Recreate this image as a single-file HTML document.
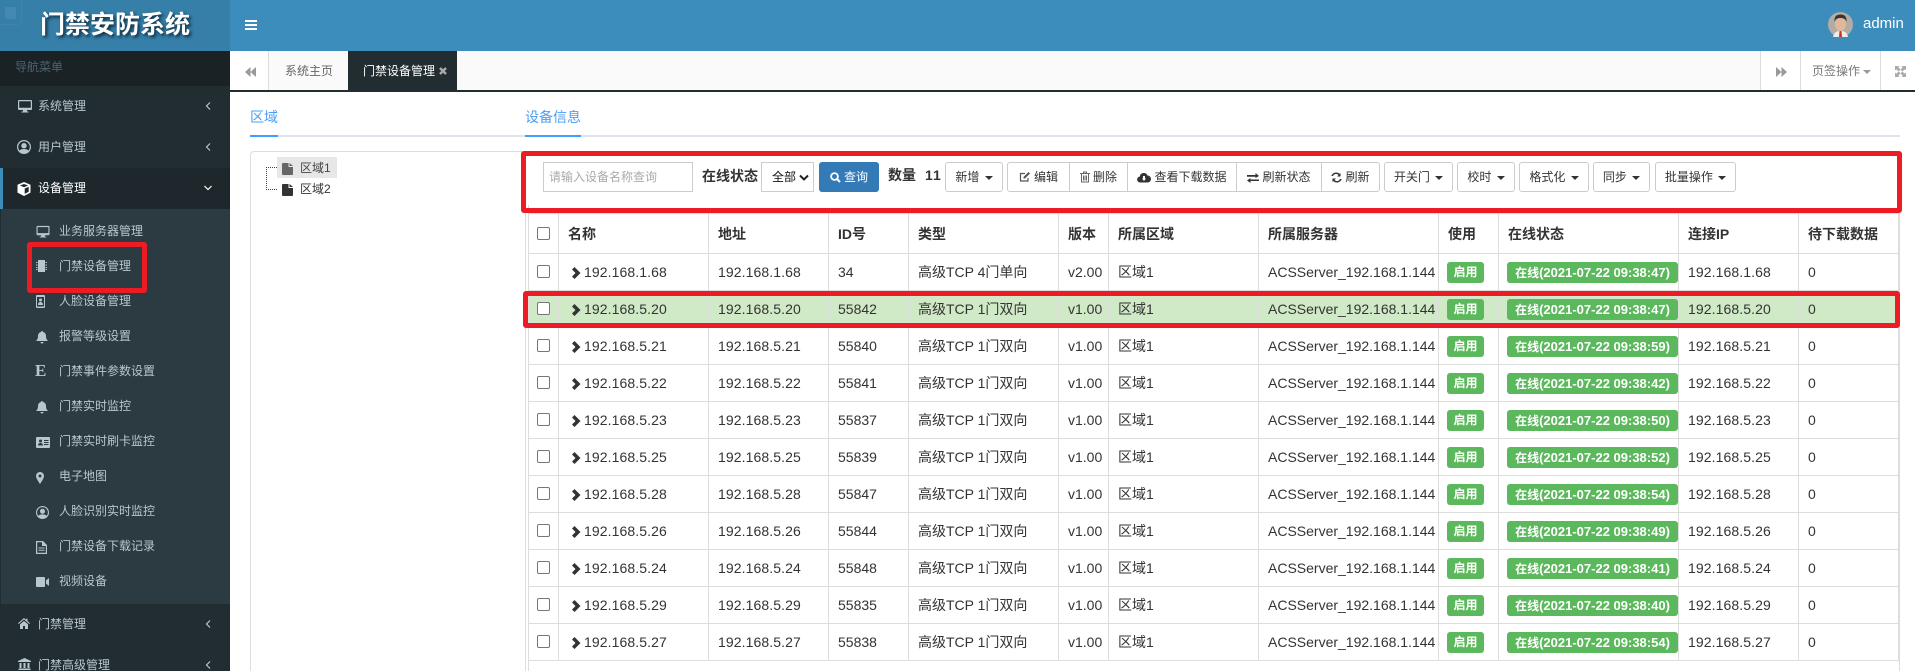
<!DOCTYPE html>
<html><head><meta charset="utf-8"><title>门禁安防系统</title>
<style>
*{box-sizing:border-box}
html,body{margin:0;padding:0;width:1915px;height:671px;overflow:hidden;background:#fff;font-family:"Liberation Sans","Noto Sans CJK SC",sans-serif;font-size:12px;color:#333}
#w{position:relative;width:1915px;height:671px;overflow:hidden}
.a{position:absolute}
.side{left:0;top:51px;width:230px;height:620px;background:#222d32;color:#b8c7ce;overflow:hidden}
.m{position:absolute;left:38px;line-height:20px;height:20px;white-space:nowrap}
.s{position:absolute;left:59px;line-height:20px;height:20px;white-space:nowrap;color:#b8c7ce}
.side svg{position:absolute;fill:#b8c7ce}
.btn{position:absolute;top:162px;height:30px;border:1px solid #ccc;background:#fff;border-radius:3px;line-height:28px;text-align:center;white-space:nowrap;color:#333;font-size:12px}
.btn svg{vertical-align:-2px;margin-right:3px}
.c{display:inline-block;width:0;height:0;border-top:4px solid #333;border-left:4px solid transparent;border-right:4px solid transparent;margin-left:2px;vertical-align:1px}
table{position:absolute;left:528px;top:213px;width:1370px;table-layout:fixed;border-collapse:collapse;font-size:14px;color:#333}
td,th{border:1px solid #ddd;padding:0 0 0 9px;text-align:left;white-space:nowrap;overflow:visible;height:37px;line-height:20px}
th{height:40px;font-weight:bold}
td:first-child,th:first-child{padding:0 0 0 8px}
tr.g td{background:#d0e9c6}
i.cb{display:inline-block;width:13px;height:13px;border:1px solid #767676;border-radius:2px;background:#fff;vertical-align:middle;margin-top:-3px}
td svg{vertical-align:-2px;margin:0 3px 0 4px}
.ip{letter-spacing:.1px}
.b{display:inline-block;height:21px;line-height:21px;background:#5cb85c;color:#fff;border-radius:3px;font-weight:bold;font-size:12px;text-align:center;vertical-align:middle;margin-left:-1px;position:relative;top:0}
.b1{width:37px}
.b2{width:171px;margin-left:-1px}
.b2 span{font-size:13px}
.r{position:absolute;border:5px solid #ed1c24;border-radius:3px;background:transparent}
</style></head><body><div id="w">

<!-- header -->
<div class="a" style="left:0;top:0;width:230px;height:51px;background:#367fa9"></div>
<div class="a" style="left:-8px;top:-8px;width:30px;height:33px;border:1px solid #3d86b0;border-radius:5px"></div>
<div class="a" style="left:5px;top:7px;width:11px;height:12px;background:#4389b2;border-radius:2px"></div>
<div class="a" style="left:40px;top:8px;width:152px;height:34px;line-height:34px;font-size:25px;font-weight:bold;color:#fff;white-space:nowrap;text-shadow:2px 2px 3px #0e2a3c">门禁安防系统</div>
<div class="a" style="left:230px;top:0;width:1685px;height:51px;background:#3c8dbc"></div>
<div class="a" style="left:245px;top:20px;width:12px;height:2px;background:#fff"></div>
<div class="a" style="left:245px;top:24px;width:12px;height:2px;background:#fff"></div>
<div class="a" style="left:245px;top:28px;width:12px;height:2px;background:#fff"></div>
<svg class="a" style="left:1828px;top:12px" width="25" height="25" viewBox="0 0 25 25"><circle cx="12.500" cy="12.500" r="12.500" fill="#b3aca6"/><path d="M5 25c1-5 4-6 7.500-6s6.500 1 7.500 6z" fill="#f1ece8"/><path d="M11.500 19h2l.5 6h-3z" fill="#c0392b"/><ellipse cx="12.500" cy="12" rx="5.500" ry="7" fill="#e3b79c"/><path d="M6.500 10C6 4 9 2.500 12.500 2.500S19 4 18.500 10c-1-3-3-4-6-4s-5 1-6 4z" fill="#3a3431"/></svg>
<div class="a" style="left:1863px;top:14px;line-height:20px;font-size:15px;color:#fff">admin</div>

<!-- sidebar -->
<div class="a side">
<div class="a" style="left:0;top:0;width:230px;height:35px;background:#1a2226"></div>
<div class="a" style="left:15px;top:6px;line-height:20px;color:#4b646f">导航菜单</div>

<svg style="left:18px;top:48px" width="14" height="14" viewBox="0 0 14 14"><path fill-rule="evenodd" d="M1 1h12a1 1 0 011 1v8a1 1 0 01-1 1H9v1.500h1.500V13.500h-7V12.500H5V11H1a1 1 0 01-1-1V2a1 1 0 011-1zm.2 1.300v6.400h11.600V2.300z"/></svg>
<div class="m" style="top:45px">系统管理</div>
<svg style="left:204px;top:50px" width="8" height="10" viewBox="0 0 8 10"><path d="M6 1.500L2.500 5 6 8.500" fill="none" stroke="#b8c7ce" stroke-width="1.200"/></svg>

<svg style="left:17px;top:89px" width="14" height="14" viewBox="0 0 14 14"><path fill-rule="evenodd" d="M7 0a7 7 0 110 14A7 7 0 017 0zm0 1.200a5.800 5.800 0 00-4.500 9.400C3.300 9.400 5 9 7 9s3.700.4 4.500 1.600A5.800 5.800 0 007 1.200zM7 3a2.700 2.700 0 110 5.400A2.700 2.700 0 017 3z"/></svg>
<div class="m" style="top:86px">用户管理</div>
<svg style="left:204px;top:91px" width="8" height="10" viewBox="0 0 8 10"><path d="M6 1.500L2.500 5 6 8.500" fill="none" stroke="#b8c7ce" stroke-width="1.200"/></svg>

<div class="a" style="left:0;top:117px;width:230px;height:41px;background:#1e282c;border-left:3px solid #3c8dbc"></div>
<svg style="left:17px;top:131px;fill:#fff" width="14" height="14" viewBox="0 0 14 14"><path d="M7 0l6.500 2.800v7.800L7 14 .5 10.600V2.800zM7 2L3 3.500 7 5.200l4-1.700zM7.700 6.500v5.400l4-2.100V4.800z"/></svg>
<div class="m" style="top:127px;color:#fff">设备管理</div>
<svg style="left:203px;top:133px" width="10" height="8" viewBox="0 0 10 8"><path d="M1.500 2L5 5.500 8.500 2" fill="none" stroke="#fff" stroke-width="1.200"/></svg>

<div class="a" style="left:1px;top:158px;width:229px;height:395px;background:#2c3b41"></div>

<svg style="left:36px;top:174px" width="14" height="13" viewBox="0 0 14 14"><path fill-rule="evenodd" d="M1 1h12a1 1 0 011 1v8a1 1 0 01-1 1H9v1.500h1.500V13.500h-7V12.500H5V11H1a1 1 0 01-1-1V2a1 1 0 011-1zm.2 1.300v6.400h11.600V2.300z"/></svg>
<div class="s" style="top:170px">业务服务器管理</div>

<svg style="left:36px;top:209px" width="11" height="12" viewBox="0 0 11 12"><path d="M2 0h7v12H2zM0 2h1.500v1H0zM0 4.500h1.500v1H0zM0 7h1.500v1H0zM0 9h1.500v1H0zM9.500 2H11v1H9.500zM9.500 4.500H11v1H9.500zM9.500 7H11v1H9.500zM9.500 9H11v1H9.500z"/></svg>
<div class="s" style="top:205px">门禁设备管理</div>

<svg style="left:36px;top:244px" width="9" height="13" viewBox="0 0 9 13"><path fill-rule="evenodd" d="M0 1a1 1 0 011-1h7a1 1 0 011 1v11a1 1 0 01-1 1H1a1 1 0 01-1-1zm1 1v9.500h7V2zM4.500 3.500a1.500 1.500 0 110 3 1.500 1.500 0 010-3zM2 10c0-2 1-3 2.500-3S7 8 7 10z"/></svg>
<div class="s" style="top:240px">人脸设备管理</div>

<svg style="left:36px;top:280px" width="12" height="13" viewBox="0 0 12 13"><path d="M6 0a1 1 0 011 1c2 .5 3 2 3 4 0 2.500.7 3.700 2 5H0c1.300-1.300 2-2.500 2-5 0-2 1-3.500 3-4a1 1 0 011-1zM4.500 11h3a1.500 1.500 0 01-3 0z"/></svg>
<div class="s" style="top:275px">报警等级设置</div>

<div class="a" style="left:35px;top:310px;font:bold 17px/20px 'Liberation Serif',serif;color:#b8c7ce">E</div>
<div class="s" style="top:310px">门禁事件参数设置</div>

<svg style="left:36px;top:350px" width="12" height="13" viewBox="0 0 12 13"><path d="M6 0a1 1 0 011 1c2 .5 3 2 3 4 0 2.500.7 3.700 2 5H0c1.300-1.300 2-2.500 2-5 0-2 1-3.500 3-4a1 1 0 011-1zM4.500 11h3a1.500 1.500 0 01-3 0z"/></svg>
<div class="s" style="top:345px">门禁实时监控</div>

<svg style="left:36px;top:386px" width="14" height="11" viewBox="0 0 14 11"><path fill-rule="evenodd" d="M1 0h12a1 1 0 011 1v9a1 1 0 01-1 1H1a1 1 0 01-1-1V1a1 1 0 011-1zm3.500 2.500a1.500 1.500 0 100 3 1.500 1.500 0 000-3zM2 8.500h5c0-1.500-1-2.500-2.500-2.500S2 7 2 8.500zM8 3v1h4.500V3zM8 5v1h4.500V5zM8 7v1h4.500V7z"/></svg>
<div class="s" style="top:380px">门禁实时刷卡监控</div>

<svg style="left:36px;top:421px" width="8" height="12" viewBox="0 0 8 12"><path fill-rule="evenodd" d="M4 0a4 4 0 014 4c0 2-2 5-4 8C2 9 0 6 0 4a4 4 0 014-4zm0 2.500a1.500 1.500 0 100 3 1.500 1.500 0 000-3z"/></svg>
<div class="s" style="top:415px">电子地图</div>

<svg style="left:36px;top:455px" width="13" height="13" viewBox="0 0 14 14"><path fill-rule="evenodd" d="M7 0a7 7 0 110 14A7 7 0 017 0zm0 1.200a5.800 5.800 0 00-4.500 9.400C3.300 9.400 5 9 7 9s3.700.4 4.500 1.600A5.800 5.800 0 007 1.200zM7 3a2.700 2.700 0 110 5.400A2.700 2.700 0 017 3z"/></svg>
<div class="s" style="top:450px">人脸识别实时监控</div>

<svg style="left:36px;top:490px" width="11" height="13" viewBox="0 0 11 13"><path fill-rule="evenodd" d="M0 0h7l4 4v9H0zm1.200 1.200v10.600h8.600V5H6V1.200zM2.500 6.500h6v1h-6zM2.500 8.700h6v1h-6z"/></svg>
<div class="s" style="top:485px">门禁设备下载记录</div>

<svg style="left:36px;top:526px" width="13" height="10" viewBox="0 0 13 10"><path d="M1 0h7a1 1 0 011 1v8a1 1 0 01-1 1H1a1 1 0 01-1-1V1a1 1 0 011-1zM10 3.500L13 1v8l-3-2.500z"/></svg>
<div class="s" style="top:520px">视频设备</div>

<svg style="left:18px;top:567px" width="12" height="11" viewBox="0 0 12 11"><path d="M6 0l2 1.700V.7h1.500V3L12 5.300l-.7.700L6 1.500.7 6 0 5.300zM2 6.300L6 3l4 3.300V11H7V8H5v3H2z"/></svg>
<div class="m" style="top:563px">门禁管理</div>
<svg style="left:204px;top:568px" width="8" height="10" viewBox="0 0 8 10"><path d="M6 1.500L2.500 5 6 8.500" fill="none" stroke="#b8c7ce" stroke-width="1.200"/></svg>

<svg style="left:18px;top:607px" width="13" height="13" viewBox="0 0 13 13"><path d="M6.500 0l6.500 3v1H0V3zM1.500 5h2v5h-2zM5.500 5h2v5h-2zM9.500 5h2v5h-2zM.5 10.500h12V12H.5z"/></svg>
<div class="m" style="top:604px">门禁高级管理</div>
<svg style="left:204px;top:609px" width="8" height="10" viewBox="0 0 8 10"><path d="M6 1.500L2.500 5 6 8.500" fill="none" stroke="#b8c7ce" stroke-width="1.200"/></svg>
</div>

<!-- tabs -->
<div class="a" style="left:230px;top:51px;width:1685px;height:41px;background:#fafafa;border-bottom:2px solid #222d32"></div>
<div class="a" style="left:230px;top:51px;width:39px;height:39px;background:#fff;border-right:1px solid #ddd"></div>
<svg class="a" style="left:245px;top:67px" width="11" height="10" viewBox="0 0 11 10"><path d="M5.500 0v10L0 5zM11 0v10L5.500 5z" fill="#999"/></svg>
<div class="a" style="left:285px;top:61px;line-height:20px;color:#666">系统主页</div>
<div class="a" style="left:348px;top:51px;width:109px;height:39px;background:#222d32"></div>
<div class="a" style="left:363px;top:61px;line-height:20px;color:#fff">门禁设备管理</div>
<svg class="a" style="left:439px;top:67px" width="8" height="8" viewBox="0 0 8 8"><path d="M1 1l6 6M7 1L1 7" stroke="#aaa" stroke-width="2.400"/></svg>
<div class="a" style="left:1760px;top:51px;width:155px;height:39px;background:#fff"></div>
<div class="a" style="left:1760px;top:51px;width:1px;height:39px;background:#ddd"></div>
<div class="a" style="left:1800px;top:51px;width:1px;height:39px;background:#ddd"></div>
<div class="a" style="left:1880px;top:51px;width:1px;height:39px;background:#ddd"></div>
<svg class="a" style="left:1776px;top:67px" width="11" height="10" viewBox="0 0 11 10"><path d="M0 0v10l5.500-5zM5.500 0v10L11 5z" fill="#999"/></svg>
<div class="a" style="left:1812px;top:61px;line-height:20px;color:#777">页签操作</div>
<div class="a" style="left:1863px;top:70px;width:0;height:0;border-top:4px solid #999;border-left:4px solid transparent;border-right:4px solid transparent"></div>
<svg class="a" style="left:1895px;top:66px" width="11" height="11" viewBox="0 0 11 11"><path d="M0 0h4.500L3.300 1.200 5.500 3.600 3.600 5.500 1.200 3.300 0 4.500zM11 0v4.500L9.800 3.300 7.400 5.500 5.500 3.600 7.700 1.200 6.500 0zM0 11V6.500l1.200 1.200L3.600 5.500 5.500 7.400 3.300 9.800 4.500 11zM11 11H6.500l1.200-1.200L5.500 7.400 7.400 5.500l2.400 2.200L11 6.500z" fill="#aaa"/></svg>

<!-- content tabs -->
<div class="a" style="left:250px;top:107px;line-height:20px;font-size:14px;color:#4a9ff5">区域</div>
<div class="a" style="left:525px;top:107px;line-height:20px;font-size:14px;color:#4a9ff5">设备信息</div>
<div class="a" style="left:250px;top:135px;width:1650px;height:2px;background:#e0e4ee"></div>
<div class="a" style="left:250px;top:135px;width:28px;height:2px;background:#409eff"></div>
<div class="a" style="left:525px;top:135px;width:56px;height:2px;background:#409eff"></div>

<!-- tree -->
<div class="a" style="left:250px;top:151px;width:276px;height:540px;border:1px solid #ddd;border-radius:4px"></div>
<div class="a" style="left:277px;top:157px;width:60px;height:21px;background:#e7e7e7"></div>
<div class="a" style="left:266px;top:167px;height:23px;width:11px;border-left:1px dotted #444;border-top:1px dotted #444;border-bottom:1px dotted #444"></div>
<svg class="a" style="left:282px;top:163px" width="11" height="12" viewBox="0 0 11 12"><path d="M1 0h5.500v4H11v7a1 1 0 01-1 1H1a1 1 0 01-1-1V1a1 1 0 011-1zM7.500 0L11 3H7.500z" fill="#666"/></svg>
<svg class="a" style="left:282px;top:184px" width="11" height="12" viewBox="0 0 11 12"><path d="M1 0h5.500v4H11v7a1 1 0 01-1 1H1a1 1 0 01-1-1V1a1 1 0 011-1zM7.500 0L11 3H7.500z" fill="#333"/></svg>
<div class="a" style="left:300px;top:158px;line-height:20px;color:#444">区域1</div>
<div class="a" style="left:300px;top:179px;line-height:20px;color:#333">区域2</div>

<!-- toolbar -->
<div class="a" style="left:543px;top:162px;width:150px;height:30px;border:1px solid #ccc;line-height:28px;padding-left:5px;color:#aaa;font-size:12px">请输入设备名称查询</div>
<div class="a" style="left:702px;top:166px;line-height:20px;font-size:14px;font-weight:bold;color:#333">在线状态</div>
<div class="a" style="left:761px;top:162px;width:53px;height:30px;border:1px solid #ccc;line-height:28px;padding-left:10px;color:#111;font-size:12px">全部</div>
<svg class="a" style="left:799px;top:174px" width="10" height="7" viewBox="0 0 10 7"><path d="M1 1.500L5 5.500 9 1.500" fill="none" stroke="#222" stroke-width="2"/></svg>
<div class="a" style="left:819px;top:162px;width:60px;height:30px;background:#337ab7;border-radius:3px;color:#fff;line-height:30px;padding-left:25px;font-size:12px">查询</div>
<svg class="a" style="left:830px;top:172px" width="11" height="11" viewBox="0 0 11 11"><circle cx="4.500" cy="4.500" r="3.400" fill="none" stroke="#fff" stroke-width="1.800"/><path d="M7 7l3 3" stroke="#fff" stroke-width="2.200"/></svg>
<div class="a" style="left:888px;top:165px;line-height:20px;font-size:14px;font-weight:bold">数量</div>
<div class="a" style="left:925px;top:165px;line-height:20px;font-size:14px;font-weight:bold;letter-spacing:1px">11</div>

<div class="btn" style="left:945px;width:58px">新增 <i class="c"></i></div>
<div class="btn" style="left:1007px;width:63px;border-radius:3px 0 0 3px"><svg width="12" height="12" viewBox="0 0 12 12"><path d="M9 7v3H1.500V2.500H6" fill="none" stroke="#555" stroke-width="1.200"/><path d="M4.500 6l5-5 1.500 1.500-5 5H4.500z" fill="#555"/></svg>编辑</div>
<div class="btn" style="left:1069px;width:59px;border-radius:0"><svg width="10" height="12" viewBox="0 0 10 12"><path d="M0 2.500h10M3.500 2.500V1h3v1.500M1.500 3v8h7V3M3.500 4.500v5M5 4.500v5M6.500 4.500v5" fill="none" stroke="#666" stroke-width="1"/></svg>删除</div>
<div class="btn" style="left:1127px;width:110px;border-radius:0"><svg width="14" height="11" viewBox="0 0 14 11"><path d="M3.500 10.500a3 3 0 01-.7-6A4 4 0 0110.500 3.500 3.500 3.500 0 0110.500 10.500zM5 6.500l2 2.500 2-2.500H8V4H6v2.500z" fill-rule="evenodd" fill="#333"/></svg>查看下载数据</div>
<div class="btn" style="left:1236px;width:86px;border-radius:0"><svg width="12" height="10" viewBox="0 0 12 10"><path d="M0 2h8.500V0L12 3 8.500 5V3.700H0zM12 6.500H3.500V5L0 7.500 3.500 10V8H12z" fill="#333"/></svg>刷新状态</div>
<div class="btn" style="left:1321px;width:59px;border-radius:0 3px 3px 0"><svg width="11" height="11" viewBox="0 0 11 11"><path d="M9.500 1v3.500H6L7.500 3A3.300 3.300 0 002 4H.3A5 5 0 018.600 1.900zM1.500 10V6.500H5L3.500 8A3.300 3.300 0 009 7h1.700A5 5 0 012.400 9.100z" fill="#333"/></svg>刷新</div>
<div class="btn" style="left:1384px;width:69px">开关门 <i class="c"></i></div>
<div class="btn" style="left:1457px;width:58px">校时 <i class="c"></i></div>
<div class="btn" style="left:1519px;width:70px">格式化 <i class="c"></i></div>
<div class="btn" style="left:1593px;width:57px">同步 <i class="c"></i></div>
<div class="btn" style="left:1655px;width:81px">批量操作 <i class="c"></i></div>

<!-- table -->
<div class="a" style="left:525px;top:205px;width:1px;height:466px;background:#ddd"></div>
<div class="a" style="left:528px;top:205px;width:1px;height:466px;background:#ddd"></div>
<div class="a" style="left:1899px;top:205px;width:1px;height:466px;background:#ddd"></div>
<table>
<colgroup><col style="width:30px"><col style="width:150px"><col style="width:120px"><col style="width:80px"><col style="width:150px"><col style="width:50px"><col style="width:150px"><col style="width:180px"><col style="width:60px"><col style="width:180px"><col style="width:120px"><col style="width:100px"></colgroup>
<tr><th><i class="cb"></i></th><th>名称</th><th>地址</th><th>ID号</th><th>类型</th><th>版本</th><th>所属区域</th><th>所属服务器</th><th>使用</th><th>在线状态</th><th>连接IP</th><th>待下载数据</th></tr>
<tr><td><i class="cb"></i></td><td><svg width="9" height="12" viewBox="0 0 9 12"><path d="M2.500 0L8.500 6l-6 6L0 9.500 3.500 6 0 2.500z" fill="#333"/></svg><span class="ip">192.168.1.68</span></td><td class="ip">192.168.1.68</td><td>34</td><td>高级TCP 4门单向</td><td>v2.00</td><td>区域1</td><td>ACSServer_192.168.1.144</td><td><span class="b b1">启用</span></td><td><span class="b b2">在线<span>(2021-07-22 09:38:47)</span></span></td><td class="ip">192.168.1.68</td><td>0</td></tr>
<tr class="g"><td><i class="cb"></i></td><td><svg width="9" height="12" viewBox="0 0 9 12"><path d="M2.500 0L8.500 6l-6 6L0 9.500 3.500 6 0 2.500z" fill="#333"/></svg><span class="ip">192.168.5.20</span></td><td class="ip">192.168.5.20</td><td>55842</td><td>高级TCP 1门双向</td><td>v1.00</td><td>区域1</td><td>ACSServer_192.168.1.144</td><td><span class="b b1">启用</span></td><td><span class="b b2">在线<span>(2021-07-22 09:38:47)</span></span></td><td class="ip">192.168.5.20</td><td>0</td></tr>
<tr><td><i class="cb"></i></td><td><svg width="9" height="12" viewBox="0 0 9 12"><path d="M2.500 0L8.500 6l-6 6L0 9.500 3.500 6 0 2.500z" fill="#333"/></svg><span class="ip">192.168.5.21</span></td><td class="ip">192.168.5.21</td><td>55840</td><td>高级TCP 1门双向</td><td>v1.00</td><td>区域1</td><td>ACSServer_192.168.1.144</td><td><span class="b b1">启用</span></td><td><span class="b b2">在线<span>(2021-07-22 09:38:59)</span></span></td><td class="ip">192.168.5.21</td><td>0</td></tr>
<tr><td><i class="cb"></i></td><td><svg width="9" height="12" viewBox="0 0 9 12"><path d="M2.500 0L8.500 6l-6 6L0 9.500 3.500 6 0 2.500z" fill="#333"/></svg><span class="ip">192.168.5.22</span></td><td class="ip">192.168.5.22</td><td>55841</td><td>高级TCP 1门双向</td><td>v1.00</td><td>区域1</td><td>ACSServer_192.168.1.144</td><td><span class="b b1">启用</span></td><td><span class="b b2">在线<span>(2021-07-22 09:38:42)</span></span></td><td class="ip">192.168.5.22</td><td>0</td></tr>
<tr><td><i class="cb"></i></td><td><svg width="9" height="12" viewBox="0 0 9 12"><path d="M2.500 0L8.500 6l-6 6L0 9.500 3.500 6 0 2.500z" fill="#333"/></svg><span class="ip">192.168.5.23</span></td><td class="ip">192.168.5.23</td><td>55837</td><td>高级TCP 1门双向</td><td>v1.00</td><td>区域1</td><td>ACSServer_192.168.1.144</td><td><span class="b b1">启用</span></td><td><span class="b b2">在线<span>(2021-07-22 09:38:50)</span></span></td><td class="ip">192.168.5.23</td><td>0</td></tr>
<tr><td><i class="cb"></i></td><td><svg width="9" height="12" viewBox="0 0 9 12"><path d="M2.500 0L8.500 6l-6 6L0 9.500 3.500 6 0 2.500z" fill="#333"/></svg><span class="ip">192.168.5.25</span></td><td class="ip">192.168.5.25</td><td>55839</td><td>高级TCP 1门双向</td><td>v1.00</td><td>区域1</td><td>ACSServer_192.168.1.144</td><td><span class="b b1">启用</span></td><td><span class="b b2">在线<span>(2021-07-22 09:38:52)</span></span></td><td class="ip">192.168.5.25</td><td>0</td></tr>
<tr><td><i class="cb"></i></td><td><svg width="9" height="12" viewBox="0 0 9 12"><path d="M2.500 0L8.500 6l-6 6L0 9.500 3.500 6 0 2.500z" fill="#333"/></svg><span class="ip">192.168.5.28</span></td><td class="ip">192.168.5.28</td><td>55847</td><td>高级TCP 1门双向</td><td>v1.00</td><td>区域1</td><td>ACSServer_192.168.1.144</td><td><span class="b b1">启用</span></td><td><span class="b b2">在线<span>(2021-07-22 09:38:54)</span></span></td><td class="ip">192.168.5.28</td><td>0</td></tr>
<tr><td><i class="cb"></i></td><td><svg width="9" height="12" viewBox="0 0 9 12"><path d="M2.500 0L8.500 6l-6 6L0 9.500 3.500 6 0 2.500z" fill="#333"/></svg><span class="ip">192.168.5.26</span></td><td class="ip">192.168.5.26</td><td>55844</td><td>高级TCP 1门双向</td><td>v1.00</td><td>区域1</td><td>ACSServer_192.168.1.144</td><td><span class="b b1">启用</span></td><td><span class="b b2">在线<span>(2021-07-22 09:38:49)</span></span></td><td class="ip">192.168.5.26</td><td>0</td></tr>
<tr><td><i class="cb"></i></td><td><svg width="9" height="12" viewBox="0 0 9 12"><path d="M2.500 0L8.500 6l-6 6L0 9.500 3.500 6 0 2.500z" fill="#333"/></svg><span class="ip">192.168.5.24</span></td><td class="ip">192.168.5.24</td><td>55848</td><td>高级TCP 1门双向</td><td>v1.00</td><td>区域1</td><td>ACSServer_192.168.1.144</td><td><span class="b b1">启用</span></td><td><span class="b b2">在线<span>(2021-07-22 09:38:41)</span></span></td><td class="ip">192.168.5.24</td><td>0</td></tr>
<tr><td><i class="cb"></i></td><td><svg width="9" height="12" viewBox="0 0 9 12"><path d="M2.500 0L8.500 6l-6 6L0 9.500 3.500 6 0 2.500z" fill="#333"/></svg><span class="ip">192.168.5.29</span></td><td class="ip">192.168.5.29</td><td>55835</td><td>高级TCP 1门双向</td><td>v1.00</td><td>区域1</td><td>ACSServer_192.168.1.144</td><td><span class="b b1">启用</span></td><td><span class="b b2">在线<span>(2021-07-22 09:38:40)</span></span></td><td class="ip">192.168.5.29</td><td>0</td></tr>
<tr><td><i class="cb"></i></td><td><svg width="9" height="12" viewBox="0 0 9 12"><path d="M2.500 0L8.500 6l-6 6L0 9.500 3.500 6 0 2.500z" fill="#333"/></svg><span class="ip">192.168.5.27</span></td><td class="ip">192.168.5.27</td><td>55838</td><td>高级TCP 1门双向</td><td>v1.00</td><td>区域1</td><td>ACSServer_192.168.1.144</td><td><span class="b b1">启用</span></td><td><span class="b b2">在线<span>(2021-07-22 09:38:54)</span></span></td><td class="ip">192.168.5.27</td><td>0</td></tr>
</table>

<!-- red annotation boxes -->
<div class="r" style="left:27px;top:242px;width:120px;height:51px"></div>
<div class="r" style="left:521px;top:151px;width:1381px;height:62px"></div>
<div class="r" style="left:523px;top:291px;width:1377px;height:37px"></div>
</div></body></html>
